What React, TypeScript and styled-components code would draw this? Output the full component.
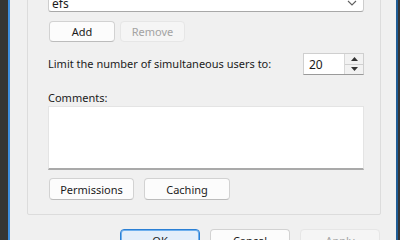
import React from 'react';
import styled, { createGlobalStyle } from 'styled-components';

const GlobalStyle = createGlobalStyle`
  html, body {
    margin: 0;
    padding: 0;
    width: 400px;
    height: 240px;
    overflow: hidden;
    background: #3a3a3a;
  }
  * {
    box-sizing: border-box;
  }
`;

const Screen = styled.div`
  display: flex;
  width: 400px;
  height: 240px;
  overflow: hidden;
  font-family: "Noto Sans", "Open Sans", sans-serif;
  font-size: 11px;
  color: #1b1b1b;
`;

const Desktop = styled.div<{ $w: number }>`
  width: ${p => p.$w}px;
  flex-shrink: 0;
  background: #353535;
`;

const Window = styled.div`
  flex: 1;
  background: #f0f0f0;
  border-left: 2px solid #3d8ee0;
  border-right: 2px solid #1f5d96;
  padding: 0 15px 0 17px;
  display: flex;
  flex-direction: column;
`;

const GroupBox = styled.div`
  margin-top: -21px;
  border: 1px solid #dcdcdc;
  border-radius: 2px;
  padding: 10px 16px 14px 20px;
  display: flex;
  flex-direction: column;
`;

const Combo = styled.div`
  height: 22px;
  background: #fff;
  border: 1px solid #cdcdcd;
  border-bottom-color: #a8a8a8;
  border-radius: 3px;
  display: flex;
  align-items: center;
  justify-content: space-between;
  padding: 4px 6px 0 3px;
  font-size: 12px;
`;

const ButtonRow = styled.div<{ $gap: number; $top: number }>`
  display: flex;
  gap: ${p => p.$gap}px;
  margin-top: ${p => p.$top}px;
  padding-left: 1px;
`;

const Button = styled.button<{ $w: number; $h: number; $disabled?: boolean; $default?: boolean }>`
  width: ${p => p.$w}px;
  height: ${p => p.$h}px;
  font-family: inherit;
  font-size: 11px;
  padding: 0;
  border-radius: 4px;
  border: 1px solid ${p => (p.$default ? '#2a7fd4' : p.$disabled ? '#e6e6e6' : '#d2d2d2')};
  border-bottom-color: ${p => (p.$default ? '#2a7fd4' : p.$disabled ? '#e6e6e6' : '#bcbcbc')};
  background: ${p => (p.$default ? '#e3eefa' : p.$disabled ? '#f5f5f5' : '#fcfcfc')};
  color: ${p => (p.$disabled ? '#a3a3a3' : '#1b1b1b')};
  box-shadow: ${p => (p.$default ? 'inset 0 0 0 1px #6fb0ee' : 'none')};
`;

const LimitRow = styled.div`
  margin-top: 11px;
  display: flex;
  align-items: center;
  justify-content: space-between;
`;

const Label = styled.div`
  line-height: 16px;
`;

const Spin = styled.div`
  display: flex;
  height: 22px;
  width: 61px;
  border: 1px solid #cfcfcf;
  border-bottom-color: #9a9a9a;
  background: #fff;
`;

const SpinText = styled.div`
  flex: 1;
  display: flex;
  align-items: center;
  padding-left: 5px;
  font-size: 12px;
`;

const SpinButtons = styled.div`
  width: 19px;
  display: flex;
  flex-direction: column;
  border-left: 1px solid #d8d8d8;
  background: #f2f2f2;
`;

const SpinBtn = styled.div<{ $top?: boolean }>`
  flex: 1;
  display: flex;
  align-items: center;
  justify-content: center;
  border-bottom: ${p => (p.$top ? '1px solid #d0d0d0' : 'none')};
`;

const CommentsLabel = styled(Label)`
  margin-top: 15px;
`;

const Comments = styled.div`
  height: 64px;
  background: #fff;
  border: 1px solid #e4e4e4;
  border-bottom: 2px solid #a9a9a9;
`;

const Footer = styled.div`
  margin-top: 14px;
  display: flex;
  justify-content: flex-end;
  gap: 10px;
  padding-right: 1px;
`;

const Caret = ({ up }: { up?: boolean }) => (
  <svg width="7" height="4" viewBox="0 0 7 4">
    <path d={up ? 'M0 4 L3.5 0 L7 4 Z' : 'M0 0 L3.5 4 L7 0 Z'} fill="#333" />
  </svg>
);

const Chevron = () => (
  <svg width="10" height="6" viewBox="0 0 10 6">
    <path d="M1 1 L5 5 L9 1" stroke="#606060" strokeWidth="1.1" fill="none" />
  </svg>
);

const App: React.FC = () => (
  <>
    <GlobalStyle />
    <Screen>
      <Desktop $w={8} />
      <Window>
        <GroupBox>
          <Combo>
            <span>efs</span>
            <Chevron />
          </Combo>
          <ButtonRow $gap={5} $top={9}>
            <Button $w={66} $h={21}>Add</Button>
            <Button $w={65} $h={21} $disabled>Remove</Button>
          </ButtonRow>
          <LimitRow>
            <Label>Limit the number of simultaneous users to:</Label>
            <Spin>
              <SpinText>20</SpinText>
              <SpinButtons>
                <SpinBtn $top><Caret up /></SpinBtn>
                <SpinBtn><Caret /></SpinBtn>
              </SpinButtons>
            </Spin>
          </LimitRow>
          <CommentsLabel>Comments:</CommentsLabel>
          <Comments />
          <ButtonRow $gap={10} $top={8}>
            <Button $w={85} $h={22}>Permissions</Button>
            <Button $w={86} $h={22}>Caching</Button>
          </ButtonRow>
        </GroupBox>
        <Footer>
          <Button $w={80} $h={23} $default>OK</Button>
          <Button $w={80} $h={23}>Cancel</Button>
          <Button $w={80} $h={23} $disabled>Apply</Button>
        </Footer>
      </Window>
      <Desktop $w={2} />
    </Screen>
  </>
);

export default App;
